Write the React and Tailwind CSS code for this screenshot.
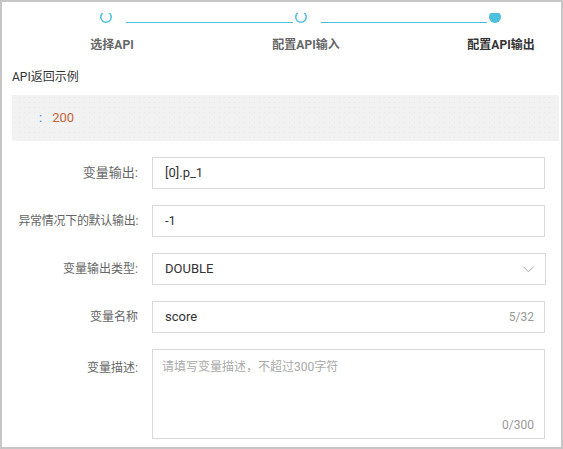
import React from "react";

const font = { fontFamily: '"Roboto", "Noto Sans CJK SC", sans-serif' };

function StepDot({ filled }) {
  return (
    <svg width="12" height="10" viewBox="0 0 12 10" className="shrink-0 block">
      {filled ? (
        <circle cx="6" cy="4" r="6" fill="#4fbfe0" />
      ) : (
        <circle cx="6" cy="4" r="5.25" fill="none" stroke="#4fbfe0" strokeWidth="1.5" />
      )}
    </svg>
  );
}

function Row({ label, labelClass = "text-[12px]", children }) {
  return (
    <div className="flex items-center">
      <div className={"w-[136px] shrink-0 text-right text-[#666] " + labelClass}>{label}</div>
      <div className="ml-[14px] w-[393px]">{children}</div>
    </div>
  );
}

export default function App() {
  return (
    <div
      className="w-[563px] h-[449px] border-2 border-[#c6c6c6] bg-white overflow-hidden relative"
      style={font}
    >
      {/* steps */}
      <div className="flex items-start pt-[11px] pl-[98px]">
        <StepDot />
        <div className="ml-[14px] mt-[9px] w-[167px] h-px bg-[#4fbfe0]" />
        <div className="ml-[2px]">
          <StepDot />
        </div>
        <div className="ml-[14px] mt-[9px] w-[166px] h-px bg-[#4fbfe0]" />
        <div className="ml-[2px]">
          <StepDot filled />
        </div>
      </div>
      <div className="flex mt-[14px] text-[12px] font-bold leading-[16px]">
        <div className="ml-[60px] w-[100px] text-center text-[#666]">选择API</div>
        <div className="ml-[94px] w-[100px] text-center text-[#666]">配置API输入</div>
        <div className="ml-[95px] w-[100px] text-center text-[#333]">配置API输出</div>
      </div>

      <div className="mt-[16px] ml-[10px] text-[12px] text-[#333] leading-[16px]">API返回示例</div>
      <div
        className="mt-[10px] ml-[10px] mr-[2px] h-[46px] bg-[#f2f2f2] flex items-center pl-[27px] text-[13px]"
        style={{
          backgroundImage: "radial-gradient(#e8e8e8 0.6px, transparent 0.6px)",
          backgroundSize: "5px 5px",
        }}
      >
        <span className="text-[#3a8ee6]">:</span>
        <span className="ml-[10px] text-[#c5653a]">200</span>
      </div>

      <div className="mt-[16px] flex flex-col gap-[16px]">
        <Row label="变量输出:" labelClass="text-[13px]">
          <div className="h-[32px] border border-[#d9d9d9] flex items-center px-[12px] text-[13px] text-[#333]">
            [0].p_1
          </div>
        </Row>
        <Row label="异常情况下的默认输出:" labelClass="text-[12px] tracking-[-0.3px]">
          <div className="h-[32px] border border-[#d9d9d9] flex items-center px-[12px] text-[13px] text-[#333]">
            -1
          </div>
        </Row>
        <Row label="变量输出类型:">
          <div className="h-[32px] w-[394px] border border-[#d9d9d9] flex items-center justify-between pl-[12px] pr-[11px] text-[13px] text-[#333]">
            <span>DOUBLE</span>
            <svg width="11" height="7" viewBox="0 0 11 7">
              <path d="M0.5 0.8 L5.5 5.8 L10.5 0.8" fill="none" stroke="#aaa" strokeWidth="1" />
            </svg>
          </div>
        </Row>
        <Row label="变量名称">
          <div className="h-[32px] border border-[#d9d9d9] flex items-center justify-between pl-[12px] pr-[10px] text-[13px]">
            <span className="text-[#333]">score</span>
            <span className="text-[12px] text-[#999]">5/32</span>
          </div>
        </Row>
        <div className="flex items-start">
          <div className="w-[136px] shrink-0 text-right text-[12px] text-[#666] pt-[10px]">变量描述:</div>
          <div className="ml-[14px] w-[393px] h-[90px] border border-[#d9d9d9] flex flex-col justify-between pl-[9px] pr-[10px] pt-[8px] pb-[4px]">
            <span className="text-[12px] text-[#aaa]">请填写变量描述，不超过300字符</span>
            <span className="self-end text-[12px] text-[#999]">0/300</span>
          </div>
        </div>
      </div>
    </div>
  );
}
